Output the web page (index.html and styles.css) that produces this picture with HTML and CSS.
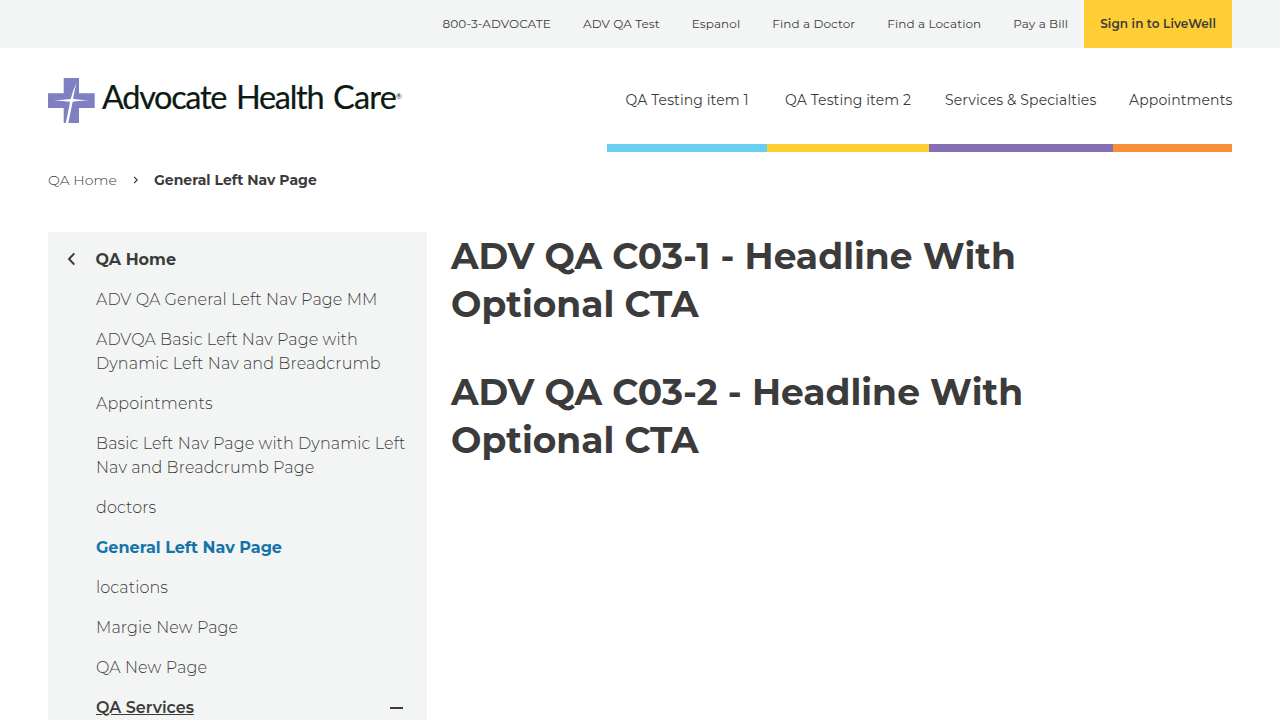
FILE: index.html
```html
<!DOCTYPE html>
<html lang="en">
<head>
<meta charset="utf-8">
<title>General Left Nav Page | Advocate Health Care</title>
<link rel="stylesheet" href="styles.css">
</head>
<body>
<nav class="utility">
  <a class="utility-link">800-3-ADVOCATE</a>
  <a class="utility-link">ADV QA Test</a>
  <a class="utility-link">Espanol</a>
  <a class="utility-link">Find a Doctor</a>
  <a class="utility-link">Find a Location</a>
  <a class="utility-link">Pay a Bill</a>
  <a class="utility-link signin">Sign in to LiveWell</a>
</nav>
<header class="header">
  <a class="logo" aria-label="Advocate Health Care">
    <svg class="logo-mark" width="47" height="46" viewBox="0 0 47 46">
      <path fill="#7f80c2" d="M15.700 0H31V15.300H46.700V30H31V45H15.700V30H0V15.300H15.700Z"/>
      <path fill="#fff" d="M28.500 5Q25.800 15 25.200 20.900Q31 21.600 41 22.200Q31 22.800 24.700 23.700Q22.600 34 20.300 45H17.700Q20.700 32 22 23.700Q16 22.900 6 22.400Q16 21.700 22.700 20.900Q24.500 13 28.500 5Z"/>
    </svg>
    <span class="wordmark"><span class="advocate">Advocate</span><span class="health">Health</span><span class="care">Care</span><span class="reg">®</span></span>
  </a>
  <nav class="main-nav">
    <a class="main-link one">QA Testing item 1</a>
    <a class="main-link two">QA Testing item 2</a>
    <a class="main-link services">Services &amp; Specialties</a>
    <a class="main-link appointments">Appointments</a>
  </nav>
</header>
<nav class="breadcrumb">
  <a class="crumb">QA Home</a>
  <svg class="crumb-arrow" width="6" height="8" viewBox="0 0 6 8"><path d="M1.200 1L4.200 4L1.200 7"/></svg>
  <span class="crumb-current">General Left Nav Page</span>
</nav>
<div class="content">
  <aside class="side">
    <a class="side-home"><svg class="back-arrow" width="9" height="14" viewBox="0 0 9 14"><path d="M7.300 1.400L2 7L7.300 12.600"/></svg><span>QA Home</span></a>
    <a class="side-link">ADV QA General Left Nav Page MM</a>
    <a class="side-link">ADVQA Basic Left Nav Page with Dynamic Left Nav and Breadcrumb</a>
    <a class="side-link">Appointments</a>
    <a class="side-link">Basic Left Nav Page with Dynamic Left Nav and Breadcrumb Page</a>
    <a class="side-link">doctors</a>
    <a class="side-link active">General Left Nav Page</a>
    <a class="side-link">locations</a>
    <a class="side-link">Margie New Page</a>
    <a class="side-link">QA New Page</a>
    <a class="side-link expanded"><span class="expanded-label">QA Services</span><span class="minus"></span></a>
  </aside>
  <main class="main">
    <h2 class="headline">ADV QA C03-1 - Headline With Optional CTA</h2>
    <h2 class="headline">ADV QA C03-2 - Headline With Optional CTA</h2>
  </main>
</div>
</body>
</html>
```
FILE: styles.css
```css
* { box-sizing: border-box; }
body {
  margin: 0;
  height: 720px;
  overflow: hidden;
  background: #fff;
  color: #3b3b3b;
  font-family: Montserrat, Inter, sans-serif;
}

.utility {
  display: flex;
  justify-content: flex-end;
  height: 48px;
  padding-right: 48px;
  background: #f3f5f4;
  font-size: 12px;
  font-weight: 400;
  letter-spacing: .1px;
  line-height: 48px;
  white-space: nowrap;
}
.utility-link { padding: 0 16px; }
.signin { background: #ffce34; font-weight: 600; letter-spacing: .1px; }

.header {
  display: flex;
  justify-content: space-between;
  height: 104px;
  padding: 0 48px;
  white-space: nowrap;
}
.logo { display: flex; padding-top: 30px; }
.logo-mark { display: block; }
.wordmark {
  display: flex;
  padding-left: 7px;
  color: #0c1a12;
  font: 400 32.5px/38px Lato, sans-serif;
}
.advocate { width: 134px; letter-spacing: -1.350px; -webkit-text-stroke: .2px #0c1a12; }
.health { width: 97px; letter-spacing: -1.300px; -webkit-text-stroke: .2px #0c1a12; }
.care { width: 63px; letter-spacing: -.8px; -webkit-text-stroke: .2px #0c1a12; }
.reg { font-size: 7px; line-height: 36px; }
.main-nav { display: flex; font-size: 14px; font-weight: 400; letter-spacing: .12px; line-height: 104px; }
.main-link { height: 104px; border-bottom: 8px solid; }
.one { width: 160px; padding-left: 18.500px; border-color: #68cff3; }
.two { width: 162px; padding-left: 18px; border-color: #ffce34; }
.services { width: 184px; padding-left: 16px; border-color: #856eb1; }
.appointments { width: 119px; padding-left: 16px; border-color: #f78f39; }

.breadcrumb {
  display: flex;
  align-items: center;
  height: 56px;
  padding: 0 48px;
  font-size: 14px;
}
.crumb { width: 85px; font-weight: 300; letter-spacing: .06px; }
.crumb-arrow { width: 6px; margin-right: 15px; }
.crumb-arrow path { fill: none; stroke: #3b3b3b; stroke-width: 1.100; }
.crumb-current { font-weight: 700; }

.content { display: flex; gap: 24px; padding: 24px 48px 0; }
.side {
  width: 379px;
  height: 520px;
  padding: 8px 16px 0 48px;
  background: #f3f5f4;
  font-size: 16px;
  line-height: 24px;
}
.side-home {
  display: flex;
  align-items: center;
  gap: 19.500px;
  margin-left: -29px;
  padding: 7px 0 9px;
  height: 40px;
  font-weight: 700;
}
.side-home span { position: relative; top: 1px; }
.back-arrow path { fill: none; stroke: #3b3b3b; stroke-width: 2; }
.side-link { display: block; padding: 8px 0; font-weight: 300; letter-spacing: .1px; }
.active { color: #1474a9; font-weight: 700; letter-spacing: 0; }
.expanded { display: flex; align-items: center; justify-content: space-between; font-weight: 600; letter-spacing: 0; }
.expanded-label { text-decoration: underline; }
.minus { width: 13px; height: 2px; margin-right: 8px; background: #3b3b3b; }

.main { width: 600px; }
.headline {
  margin: 0 0 40px;
  font-size: 36px;
  font-weight: 700;
  line-height: 48px;
}
```
